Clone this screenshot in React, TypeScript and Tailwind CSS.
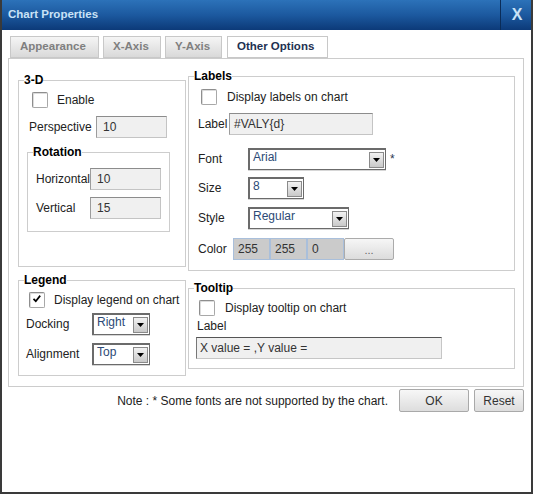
import React from "react";

function Checkbox({ checked = false }: { checked?: boolean }) {
  return (
    <div className="w-[16px] h-[16px] shrink-0 bg-white border border-[#a8a8a8] border-t-[#8e8e8e] border-l-[#8e8e8e] rounded-[2px] shadow-[inset_1px_1px_0_#dcdcdc] flex items-start justify-start">
      {checked && (
        <svg width="10" height="10" viewBox="0 0 10 10" className="ml-[2px] mt-[1px]">
          <path d="M1.5 4.8 L3.8 7.2 L8.2 1.6" stroke="#000" strokeWidth="1.7" fill="none" />
        </svg>
      )}
    </div>
  );
}

function TextBox({
  w,
  value,
  pl = "pl-[6px]",
  dark = false,
}: {
  w: string;
  value: string;
  pl?: string;
  dark?: boolean;
}) {
  return (
    <div
      className={`${w} ${pl} h-[22px] shrink-0 bg-[#f0f0f0] border flex items-center text-[#333] whitespace-nowrap ${
        dark
          ? "border-[#c6c6c6] border-t-[#555555] border-l-[#777777]"
          : "border-[#c4c4c4] border-t-[#8c8c8c] border-l-[#9c9c9c]"
      }`}
    >
      {value}
    </div>
  );
}

function Select({ w, value }: { w: string; value: string }) {
  return (
    <div
      className={`${w} h-[22px] shrink-0 bg-white border-t-2 border-l-2 border-r border-b border-[#6b6b6b] shadow-[0_1px_0_#d6d6d6] flex justify-between`}
    >
      <span className="pl-[3px] pt-[1px] leading-[12px] text-[#2c4a76] whitespace-nowrap">{value}</span>
      <div className="self-end mb-[1px] mr-[1px] w-[15px] h-[16px] border border-[#8a8a8a] bg-gradient-to-b from-[#f2f2f2] to-[#c9c9c9] flex items-center justify-center">
        <svg width="7" height="4" viewBox="0 0 7 4">
          <path d="M0 0 H7 L3.5 4 Z" fill="#000" />
        </svg>
      </div>
    </div>
  );
}

function Legend({ children }: { children: React.ReactNode }) {
  return (
    <legend className="ml-[5px] font-bold text-[12px] leading-[14px] text-black">{children}</legend>
  );
}

function ColorBox({ value }: { value: string }) {
  return (
    <div className="w-[37px] h-[22px] bg-[#cbcbcb] border border-[#a9bfdb] flex items-center pl-[4px] text-[#333]">
      {value}
    </div>
  );
}

export default function App() {
  return (
    <div className="w-[533px] h-[494px] bg-white font-['Liberation_Sans',Arial,sans-serif] text-[12px] text-[#222] flex flex-col border-l-2 border-r-2 border-b-2 border-[#3a3a3a]">
      {/* Title bar */}
      <div className="h-[30px] shrink-0 flex items-stretch bg-gradient-to-b from-[#2c72b9] via-[#1c599f] to-[#0c3a79]">
        <div className="flex-1 flex items-center pl-[6px] text-[11.5px] font-bold text-[#c9e2f6]">
          Chart Properties
        </div>
        <div className="w-[31px] border-l border-[#0a2c58] flex items-center justify-center pl-[2px] text-[16px] font-bold text-[#c9e2f6]">
          X
        </div>
      </div>

      {/* Tabs */}
      <div className="mt-[6px] pl-[8px] h-[22px] flex items-end gap-[4px] text-[11.5px] font-bold">
        <div className="w-[89px] h-[22px] pl-[9px] flex items-center border border-[#c8c8c8] bg-gradient-to-b from-[#f5f5f5] to-[#d9d9d9] text-[#7f7f7f]">
          Appearance
        </div>
        <div className="w-[58px] h-[22px] pl-[9px] flex items-center border border-[#c8c8c8] bg-gradient-to-b from-[#f5f5f5] to-[#d9d9d9] text-[#7f7f7f]">
          X-Axis
        </div>
        <div className="w-[57px] h-[22px] pl-[9px] flex items-center border border-[#c8c8c8] bg-gradient-to-b from-[#f5f5f5] to-[#d9d9d9] text-[#7f7f7f]">
          Y-Axis
        </div>
        <div className="ml-[1px] w-[101px] h-[22px] pl-[9px] flex items-center border border-[#c8c8c8] bg-white text-[#1e3152]">
          Other Options
        </div>
      </div>

      {/* Panel */}
      <div className="ml-[6px] w-[516px] h-[329px] shrink-0 border border-[#cccccc] flex pl-[9px]">
        {/* Left column */}
        <div className="w-[168px] pt-[14px] flex flex-col">
          <fieldset className="w-[168px] h-[194px] border border-[#cdcdcd]">
            <Legend>3-D</Legend>
            <div className="mt-[5px] ml-[13px] h-[16px] flex items-center">
              <Checkbox />
              <span className="ml-[9px]">Enable</span>
            </div>
            <div className="mt-[8px] ml-[10px] flex items-center">
              <span className="w-[67px] shrink-0">Perspective</span>
              <TextBox w="w-[71px]" value="10" />
            </div>
            <fieldset className="mt-[7px] ml-[8px] w-[143px] h-[87px] border border-[#cdcdcd]">
              <Legend>Rotation</Legend>
              <div className="mt-[9px] ml-[8px] flex items-center">
                <span className="w-[54px] shrink-0 whitespace-nowrap">Horizontal</span>
                <TextBox w="w-[71px]" value="10" />
              </div>
              <div className="mt-[7px] ml-[8px] flex items-center">
                <span className="w-[54px] shrink-0">Vertical</span>
                <TextBox w="w-[71px]" value="15" />
              </div>
            </fieldset>
          </fieldset>

          <fieldset className="mt-[6px] w-[168px] h-[103px] border border-[#cdcdcd]">
            <Legend>Legend</Legend>
            <div className="mt-[5px] ml-[10px] h-[16px] flex items-center">
              <Checkbox checked />
              <span className="ml-[9px] whitespace-nowrap">Display legend on chart</span>
            </div>
            <div className="mt-[5px] ml-[7px] flex items-center">
              <span className="w-[66px] shrink-0">Docking</span>
              <Select w="w-[58px]" value="Right" />
            </div>
            <div className="mt-[8px] ml-[7px] flex items-center">
              <span className="w-[66px] shrink-0">Alignment</span>
              <Select w="w-[58px]" value="Top" />
            </div>
          </fieldset>
        </div>

        {/* Right column */}
        <div className="ml-[2px] w-[327px] pt-[10px] flex flex-col">
          <fieldset className="w-[327px] h-[202px] border border-[#cdcdcd]">
            <Legend>Labels</Legend>
            <div className="mt-[6px] ml-[12px] h-[16px] flex items-center">
              <Checkbox />
              <span className="ml-[10px] whitespace-nowrap">Display labels on chart</span>
            </div>
            <div className="mt-[8px] ml-[9px] flex items-center">
              <span className="w-[31px] shrink-0">Label</span>
              <TextBox w="w-[144px]" value="#VALY{d}" pl="pl-[4px]" />
            </div>
            <div className="mt-[13px] ml-[9px] flex items-center">
              <span className="w-[50px] shrink-0">Font</span>
              <Select w="w-[138px]" value="Arial" />
              <span className="ml-[4px] text-[#2a3550]">*</span>
            </div>
            <div className="mt-[7px] ml-[9px] flex items-center">
              <span className="w-[50px] shrink-0">Size</span>
              <Select w="w-[56px]" value="8" />
            </div>
            <div className="mt-[8px] ml-[9px] flex items-center">
              <span className="w-[50px] shrink-0">Style</span>
              <Select w="w-[101px]" value="Regular" />
            </div>
            <div className="mt-[9px] ml-[9px] flex items-center">
              <span className="w-[35px] shrink-0">Color</span>
              <div className="flex">
                <ColorBox value="255" />
                <ColorBox value="255" />
                <ColorBox value="0" />
                <div className="w-[50px] h-[22px] rounded-[2px] border border-[#ababab] bg-gradient-to-b from-[#f6f6f6] to-[#dcdcdc] flex items-center justify-center pt-[3px] text-[#666] text-[11px]">
                  ...
                </div>
              </div>
            </div>
          </fieldset>

          <fieldset className="mt-[10px] w-[327px] h-[88px] border border-[#cdcdcd]">
            <Legend>Tooltip</Legend>
            <div className="mt-[5px] ml-[10px] h-[16px] flex items-center">
              <Checkbox />
              <span className="ml-[10px] whitespace-nowrap">Display tooltip on chart</span>
            </div>
            <div className="mt-[3px] ml-[8px] leading-[14px]">Label</div>
            <div className="mt-[4px] ml-[7px]">
              <TextBox w="w-[246px]" value="X value = ,Y value =" pl="pl-[3px]" dark />
            </div>
          </fieldset>
        </div>
      </div>

      {/* Bottom bar */}
      <div className="mt-[2px] pr-[7px] flex items-center justify-end">
        <span className="mr-[11px] whitespace-nowrap">Note : * Some fonts are not supported by the chart.</span>
        <div className="w-[70px] h-[23px] rounded-[2px] border border-[#a9a9a9] bg-gradient-to-b from-[#f7f7f7] to-[#dddddd] flex items-center justify-center text-[#333]">
          OK
        </div>
        <div className="ml-[5px] w-[50px] h-[23px] rounded-[2px] border border-[#a9a9a9] bg-gradient-to-b from-[#f7f7f7] to-[#dddddd] flex items-center justify-center text-[#333]">
          Reset
        </div>
      </div>
    </div>
  );
}
